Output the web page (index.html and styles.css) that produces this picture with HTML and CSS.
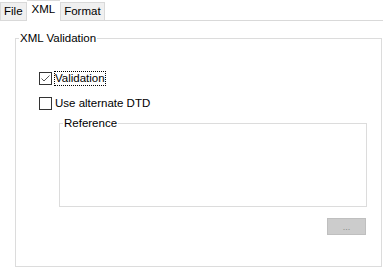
FILE: index.html
```html
<!DOCTYPE html>
<html lang="en">
<head>
  <meta charset="UTF-8">
  <title>XML Options</title>
  <link rel="stylesheet" href="styles.css">
</head>
<body>
  <!--Tab strip-->
  <div class="tabs">
    <div class="tab">File</div>
    <div class="tab active">XML</div>
    <div class="tab">Format</div>
  </div>

  <div class="page">
    <fieldset class="group">
      <legend>XML Validation</legend>

      <div class="option first">
        <span class="box checked">
          <svg width="11" height="11" viewBox="0 0 11 11"><polyline points="1.5,5.5 4,8 9.5,2.5" fill="none" stroke="#555" stroke-width="1"/></svg>
        </span>
        <span class="label focus">Validation</span>
      </div>
      <div class="option">
        <span class="box"></span>
        <span class="label">Use alternate DTD</span>
      </div>

      <fieldset class="group inner">
        <legend>Reference</legend>
      </fieldset>

      <div class="actions">
        <button type="button" class="browse" disabled>...</button>
      </div>
    </fieldset>
  </div>
</body>
</html>
```

FILE: styles.css
```css
body {
  margin: 0;
  background-color: #fff;
  color: #000;
  font-family: "Liberation Sans", Arial, sans-serif;
  font-size: 11.5px;
}

.tabs {
  display: flex;
  align-items: flex-end;
  height: 20px;
  border-bottom: 1px solid #d9d9d9;
}

.tab {
  height: 18px;
  line-height: 17px;
  padding: 0 3px;
  box-sizing: border-box;
  background-color: #f0f0f0;
  border: 1px solid #d9d9d9;
  border-bottom: none;
}

.tab.active {
  height: 21px;
  margin-bottom: -1px;
  padding: 0 5px;
  background-color: #fff;
  border-left: none;
  border-right: none;
}

.page {
  padding-top: 10px;
}

.group {
  margin: 0 1px 0 15px;
  padding: 0;
  border: 1px solid #dcdcdc;
  height: 236px;
  box-sizing: border-box;
}

.group legend {
  margin-left: 3px;
  padding: 0 1px;
  line-height: 15px;
}

.option {
  display: flex;
  align-items: center;
  height: 16px;
  padding-left: 23px;
  margin-top: 9px;
}

.option.first {
  margin-top: 24px;
}

.box {
  width: 13px;
  height: 13px;
  box-sizing: border-box;
  border: 1px solid #333;
  display: flex;
  align-items: center;
  justify-content: center;
}

.label {
  margin-left: 2px;
  border: 1px dotted transparent;
  line-height: 13px;
}

.label.focus {
  border-color: #000;
}

.group.inner {
  margin: 5px 14px 0 43px;
  height: 91px;
}

.actions {
  display: flex;
  justify-content: flex-end;
  padding-right: 15px;
  margin-top: 11px;
}

.browse {
  width: 39px;
  height: 17px;
  padding: 0;
  font-family: inherit;
  font-size: 9px;
  color: #8a8a8a;
  background-color: #cccccc;
  border: 1px solid #bfbfbf;
}
```
